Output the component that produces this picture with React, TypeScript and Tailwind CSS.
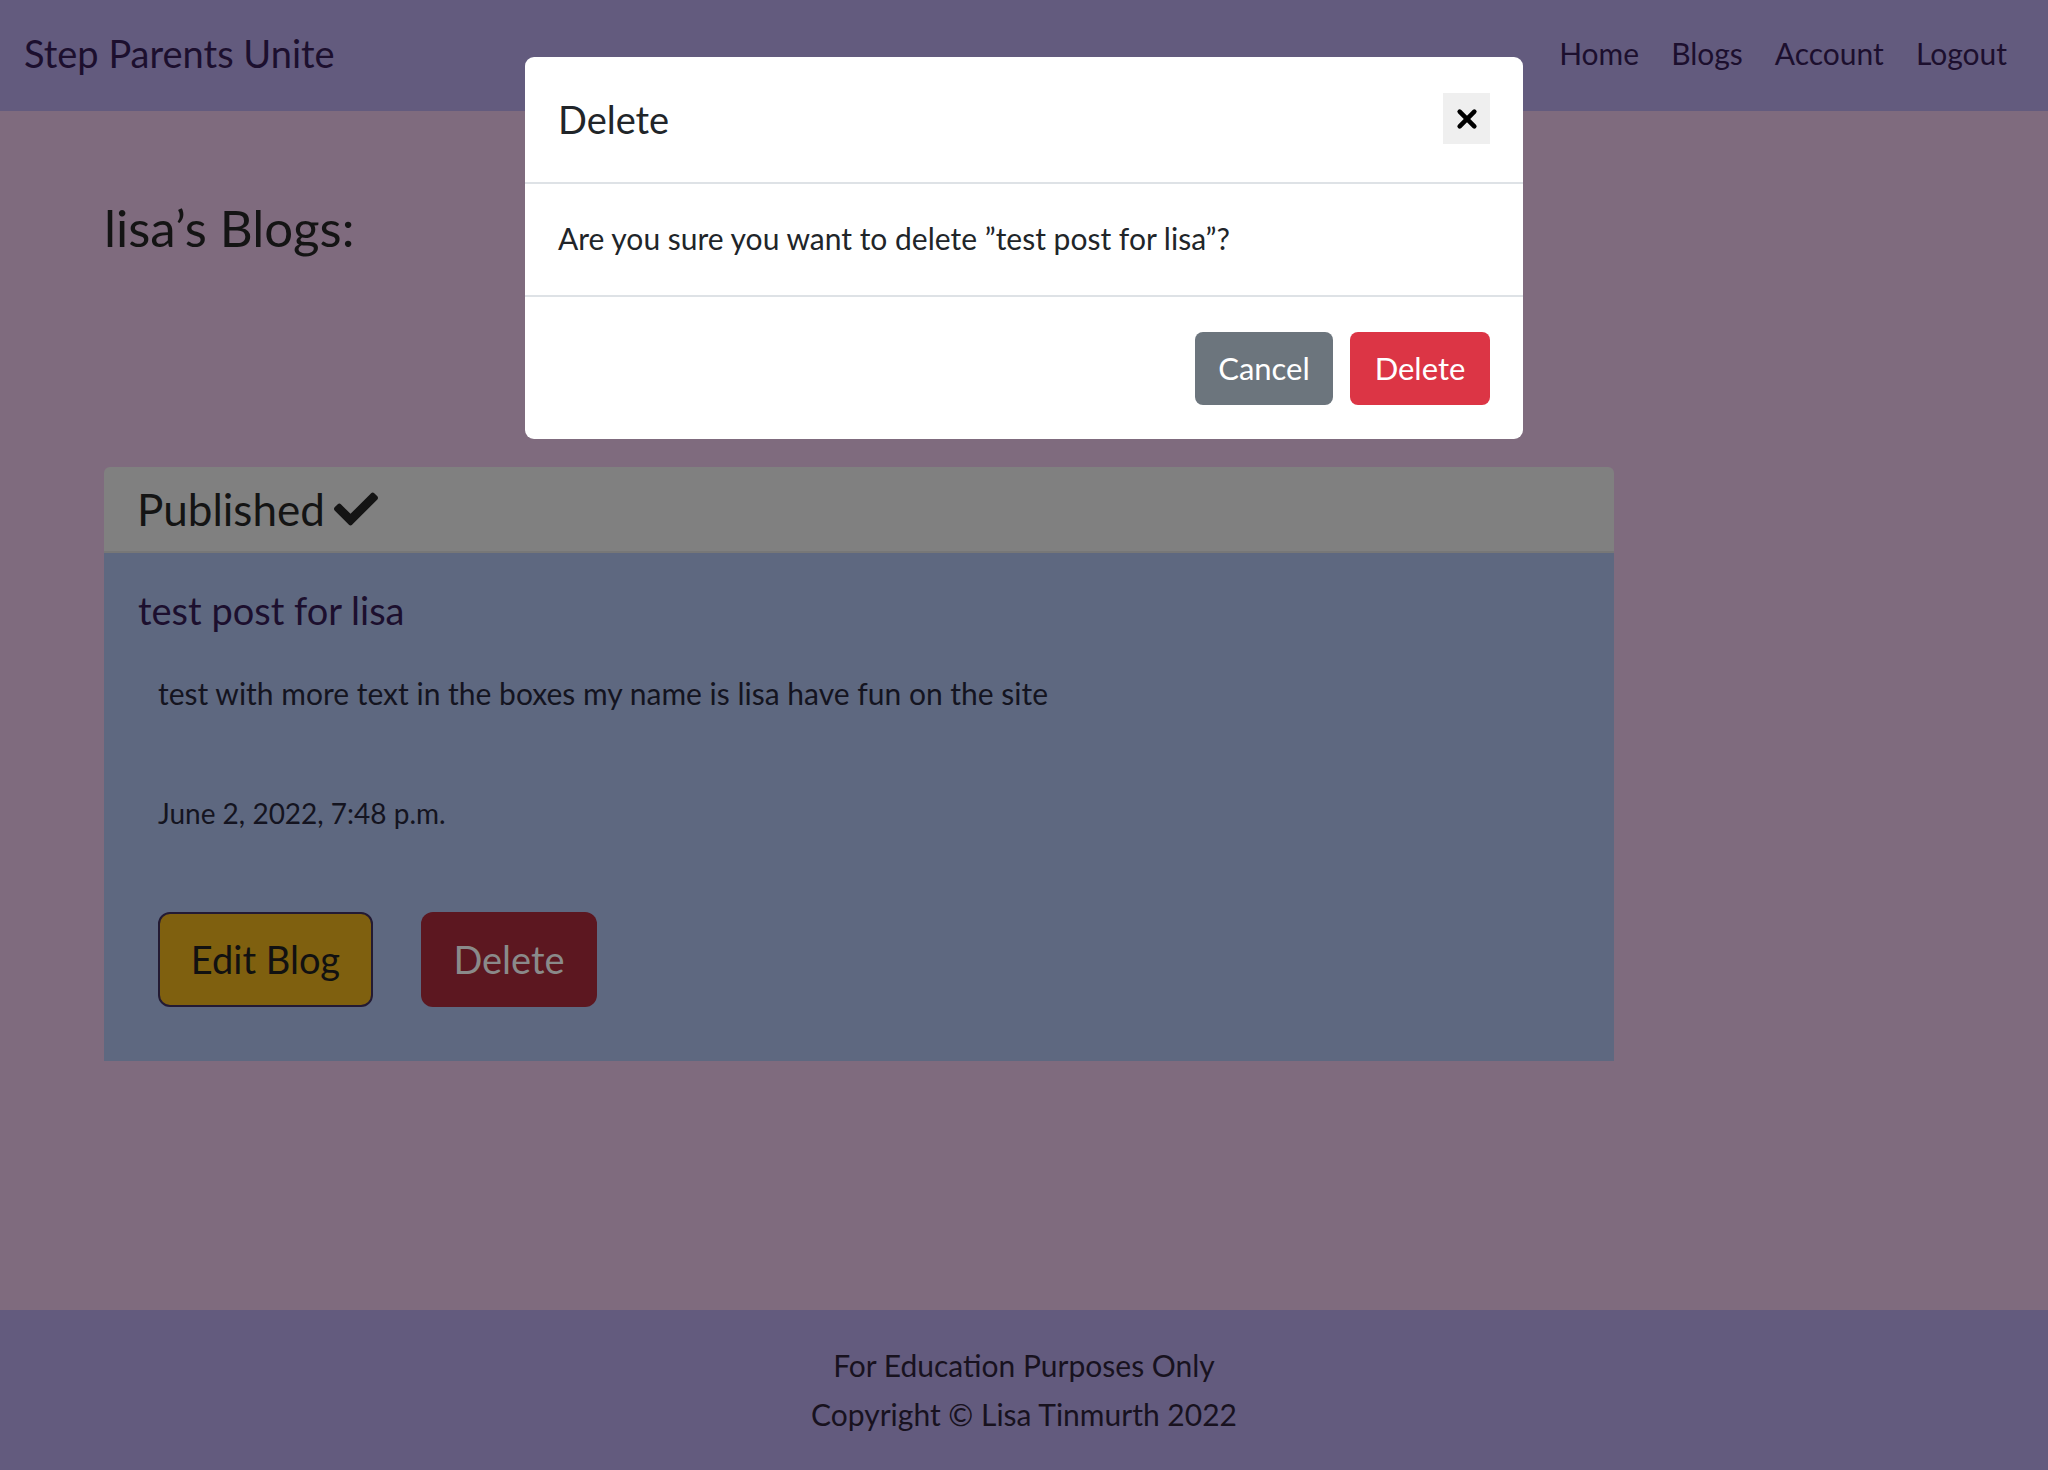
import React from 'react';

const font = { fontFamily: 'Lato, "Noto Sans", sans-serif' };

const CheckIcon = () => (
  <svg viewBox="0 0 512 512" className="w-[50px] h-[44px]" fill="#141414">
    <path d="M173.898 439.404l-166.4-166.4c-9.997-9.997-9.997-26.206 0-36.204l36.203-36.204c9.997-9.998 26.207-9.998 36.204 0L192 312.69 432.095 72.596c9.997-9.997 26.207-9.997 36.204 0l36.203 36.204c9.997 9.997 9.997 26.206 0 36.204l-294.4 294.401c-9.998 9.997-26.207 9.997-36.204-.001z" />
  </svg>
);

const CloseIcon = () => (
  <svg viewBox="0 0 24 24" className="w-[22px] h-[22px]" stroke="#000" strokeWidth="5" strokeLinecap="round">
    <line x1="4" y1="4" x2="20" y2="20" />
    <line x1="20" y1="4" x2="4" y2="20" />
  </svg>
);

const DeleteModal = () => (
  <div className="absolute left-[525px] top-[57px] w-[998px] bg-white rounded-[9px] text-[#212529]">
    {/* header */}
    <div className="h-[127px] flex items-center justify-between pl-[33px] pr-[33px] pb-[2px] border-b-2 border-[#dee2e6]">
      <h5 className="text-[38px] leading-none">Delete</h5>
      <button className="w-[47px] h-[51px] bg-[#efefef] flex items-center justify-center">
        <CloseIcon />
      </button>
    </div>
    {/* body */}
    <div className="h-[113px] flex items-center px-[33px] pb-[2px] border-b-2 border-[#dee2e6]">
      <p className="text-[30px]">Are you sure you want to delete ”test post for lisa”?</p>
    </div>
    {/* footer */}
    <div className="h-[142px] flex items-center justify-end gap-[17px] pr-[33px]">
      <button className="w-[138px] h-[73px] rounded-[8px] bg-[#6c757d] text-white text-[31px]">Cancel</button>
      <button className="w-[140px] h-[73px] rounded-[8px] bg-[#dc3545] text-white text-[31px]">Delete</button>
    </div>
  </div>
);

export default function App() {
  return (
    <div className="relative min-h-[1470px] flex flex-col bg-[#7f6b7e]" style={font}>
      <header className="h-[111px] bg-[#635b7e] flex items-center justify-between pl-[24px] pr-[25px] pb-[5px] text-[#1c0f2e]">
        <a className="text-[38px]">Step Parents Unite</a>
        <nav className="flex items-center">
          <a className="px-[16px] text-[30px]">Home</a>
          <a className="px-[16px] text-[30px]">Blogs</a>
          <a className="px-[16px] text-[30px]">Account</a>
          <a className="px-[16px] text-[30px]">Logout</a>
        </nav>
      </header>

      <main className="flex-1 pt-[83px] px-[104px]">
        <h2 className="text-[51px] leading-[68px] text-[#141414]">lisa’s Blogs:</h2>

        <div className="mt-[205px] w-[1510px] rounded-t-[6px] overflow-hidden">
          <div className="h-[86px] bg-[#808080] border-b-2 border-[#777] flex items-center gap-[6px] pl-[33px]">
            <span className="text-[44px] text-[#141414]">Published</span>
            <CheckIcon />
          </div>
          <div className="h-[508px] bg-[#5e6880] pt-[30px] pl-[34px]">
            <h5 className="text-[38px] leading-[54px] text-[#1c0f2e]">test post for lisa</h5>
            <p className="mt-[28px] ml-[20px] text-[30px] leading-[56px] text-[#141420]">
              test with more text in the boxes my name is lisa have fun on the site
            </p>
            <p className="mt-[64px] ml-[20px] text-[28px] leading-[56px] text-[#141420]">June 2, 2022, 7:48 p.m.</p>
            <div className="mt-[71px] ml-[20px] flex gap-[48px]">
              <button className="w-[215px] h-[95px] rounded-[12px] bg-[#7f600f] border-2 border-[#231a33] text-[38px] text-[#111]">
                Edit Blog
              </button>
              <button className="w-[176px] h-[95px] rounded-[12px] bg-[#5c1720] text-[38px] text-[#8a8a8a]">
                Delete
              </button>
            </div>
          </div>
        </div>
      </main>

      <footer className="h-[160px] bg-[#635b7e] flex flex-col items-center justify-center text-[30px] leading-[49px] text-[#18121f]">
        <p>For Education Purposes Only</p>
        <p>Copyright © Lisa Tinmurth 2022</p>
      </footer>

      <DeleteModal />
    </div>
  );
}
